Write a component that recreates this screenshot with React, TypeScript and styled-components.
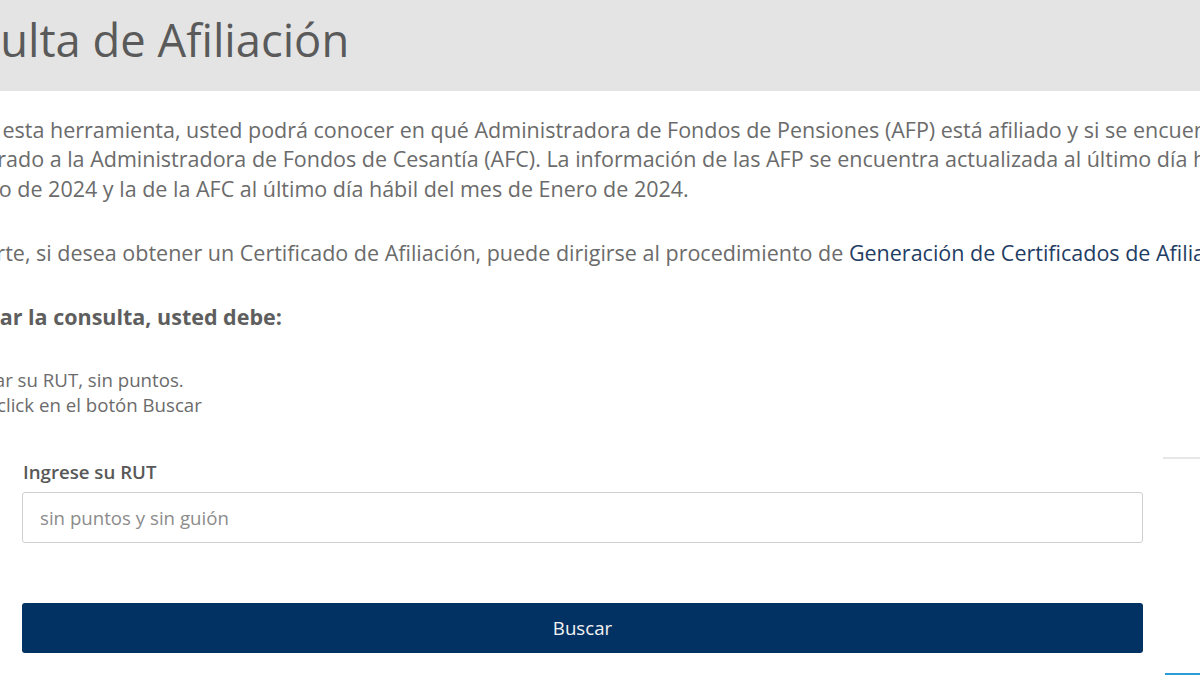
import React from "react";
import styled, { createGlobalStyle } from "styled-components";

const GlobalStyle = createGlobalStyle`
  html, body {
    margin: 0;
    padding: 0;
    background: #ffffff;
  }
  body {
    font-family: "Open Sans", "Liberation Sans", sans-serif;
    color: #6b6b6b;
  }
  #root {
    width: 1200px;
    height: 675px;
    overflow: hidden;
  }
`;

// the page is scrolled sideways in the screenshot, so the sheet starts left of the window
const Sheet = styled.div`
  width: 1500px;
  margin-left: -105px;
`;

const TitleBand = styled.div`
  height: 91px;
  box-sizing: border-box;
  padding-top: 9px;
  background: #e4e4e4;
`;

const Title = styled.h1`
  margin: 0;
  font-size: 45.33px;
  font-weight: 400;
  line-height: normal;
  color: #5a5a5a;
`;

const Content = styled.div`
  padding: 24px 0 0 7px;
`;

const Paragraph = styled.p`
  margin: 0 0 35px;
  font-size: 21.5px;
  line-height: 29.33px;
  white-space: nowrap;
`;

const Link = styled.a`
  color: #1f3d63;
  text-decoration: none;
`;

const StepsTitle = styled.h3`
  margin: 0 0 35px -2px;
  font-size: 21.5px;
  line-height: 29.33px;
  font-weight: 700;
  color: #5e5e5e;
`;

const Steps = styled.ol`
  margin: 0;
  padding-left: 39px;
  font-size: 18.67px;
  line-height: 25.33px;
`;

const FormRow = styled.div`
  display: grid;
  grid-template-columns: 1121px 1fr;
  column-gap: 20px;
  margin: 40px 0 0 120px;
`;

const Form = styled.form`
  display: flex;
  flex-direction: column;
  padding-top: 2px;
`;

const Label = styled.label`
  padding-left: 1px;
  font-size: 18.67px;
  line-height: 26.67px;
  font-weight: 600;
  color: #585858;
`;

const Input = styled.input`
  margin-top: 6px;
  height: 51px;
  box-sizing: border-box;
  padding: 0 17px;
  border: 1px solid #cfcfcf;
  border-radius: 3px;
  font-family: inherit;
  font-size: 18.67px;
  color: #555;
  outline: none;
  &::placeholder {
    color: #8c8c8c;
  }
`;

const Button = styled.button`
  margin-top: 60px;
  height: 50px;
  border: none;
  border-radius: 3px;
  background: #023263;
  color: #f2f2f2;
  font-family: inherit;
  font-size: 18.67px;
  cursor: pointer;
`;

const Sidebar = styled.aside`
  display: flex;
  flex-direction: column;
`;

const SideBox = styled.div<{ $accent: string; $height: number; $inset?: number }>`
  height: ${(p) => p.$height}px;
  margin-left: ${(p) => p.$inset || 0}px;
  border-top: 2px solid ${(p) => p.$accent};
`;

export default function App() {
  return (
    <>
      <GlobalStyle />
      <Sheet>
        <TitleBand>
          <Title>Consulta de Afiliación</Title>
        </TitleBand>
        <Content>
          <Paragraph>
            Mediante esta herramienta, usted podrá conocer en qué Administradora de Fondos de Pensiones (AFP) está afiliado y si se encuentra afiliado
            <br />
            o incorporado a la Administradora de Fondos de Cesantía (AFC). La información de las AFP se encuentra actualizada al último día hábil del mes
            <br />
            de Febrero de 2024 y la de la AFC al último día hábil del mes de Enero de 2024.
          </Paragraph>
          <Paragraph>
            Por su parte, si desea obtener un Certificado de Afiliación, puede dirigirse al procedimiento de{" "}
            <Link href="#">Generación de Certificados de Afiliación</Link>.
          </Paragraph>
          <StepsTitle>Para iniciar la consulta, usted debe:</StepsTitle>
          <Steps>
            <li>Ingresar su RUT, sin puntos.</li>
            <li>Hacer click en el botón Buscar</li>
          </Steps>
          <FormRow>
            <Form onSubmit={(e) => e.preventDefault()}>
              <Label htmlFor="rut">Ingrese su RUT</Label>
              <Input id="rut" placeholder="sin puntos y sin guión" />
              <Button type="submit">Buscar</Button>
            </Form>
            <Sidebar>
              <SideBox $accent="#e6e6e6" $height={214} />
              <SideBox $accent="#2b9cd8" $height={40} $inset={2} />
            </Sidebar>
          </FormRow>
        </Content>
      </Sheet>
    </>
  );
}
